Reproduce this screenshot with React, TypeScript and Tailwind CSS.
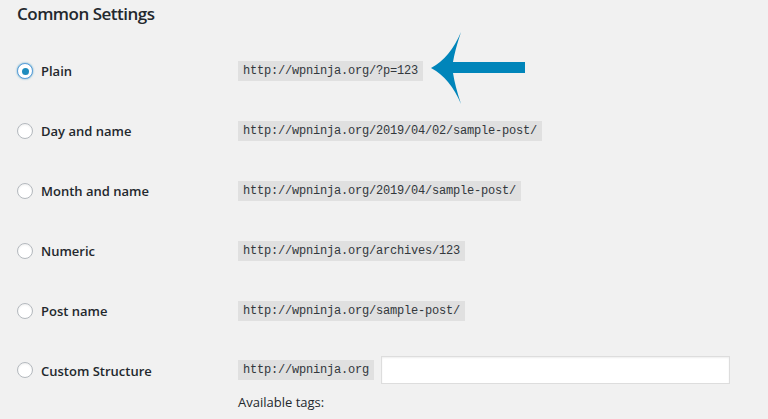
const rows = [
  { label: "Plain", url: "http://wpninja.org/?p=123", checked: true },
  { label: "Day and name", url: "http://wpninja.org/2019/04/02/sample-post/" },
  { label: "Month and name", url: "http://wpninja.org/2019/04/sample-post/" },
  { label: "Numeric", url: "http://wpninja.org/archives/123" },
  { label: "Post name", url: "http://wpninja.org/sample-post/" },
];

function Radio({ checked }: { checked?: boolean }) {
  return (
    <span
      className={
        checked
          ? "flex h-4 w-4 shrink-0 items-center justify-center rounded-full border border-[#5b9dd9] bg-white shadow-[0_0_2px_rgba(30,140,190,0.8)]"
          : "flex h-4 w-4 shrink-0 items-center justify-center rounded-full border border-[#b4b9be] bg-white shadow-[inset_0_1px_2px_rgba(0,0,0,0.07)]"
      }
    >
      {checked && <span className="h-[7px] w-[7px] rounded-full bg-[#1e8cbe]" />}
    </span>
  );
}

function Code({ children }: { children: string }) {
  return (
    <code className="inline-block bg-[#e0e0e0] px-[5px] pb-[2px] pt-[3px] font-['Liberation_Mono',monospace] text-[12px] leading-[15px] tracking-[-0.2px] text-[#32373c]">
      {children}
    </code>
  );
}

export default function App() {
  return (
    <div className="relative h-[419px] w-[768px] overflow-hidden bg-[#f1f1f1] pl-[17px] font-['Open_Sans',sans-serif] text-[#23282d]">
      <h2 className="pt-[2px] text-[17px] font-semibold leading-[24px] tracking-[-0.5px]">Common Settings</h2>
      <div className="mt-[15px]">
        {rows.map((r) => (
          <div key={r.label} className="flex h-[60px] items-center">
            <div className="flex w-[221px] items-center gap-2">
              <Radio checked={r.checked} />
              <span className="mt-[2px] text-[13px] font-semibold">{r.label}</span>
            </div>
            <Code>{r.url}</Code>
          </div>
        ))}
        <div className="flex pt-[15px]">
          <div className="flex h-[28px] w-[221px] items-center gap-2">
            <Radio />
            <span className="mt-[3px] text-[13px] font-semibold">Custom Structure</span>
          </div>
          <div>
            <div className="flex items-center gap-[7px]">
              <Code>http://wpninja.org</Code>
              <input
                type="text"
                className="h-[28px] w-[349px] border border-[#ddd] bg-white shadow-[inset_0_1px_2px_rgba(0,0,0,0.07)] outline-none"
              />
            </div>
            <p className="mt-[9px] text-[13px] text-[#23282d]">Available tags:</p>
          </div>
        </div>
      </div>
      <svg
        className="pointer-events-none absolute left-0 top-0"
        width="768"
        height="419"
        viewBox="0 0 768 419"
      >
        <path
          d="M431 68 Q450 58 461 32 Q455 50 453 62 L525 62 L525 73 L453 73 Q455 86 461 104 Q450 78 431 68 Z"
          fill="#0085ba"
        />
      </svg>
    </div>
  );
}
